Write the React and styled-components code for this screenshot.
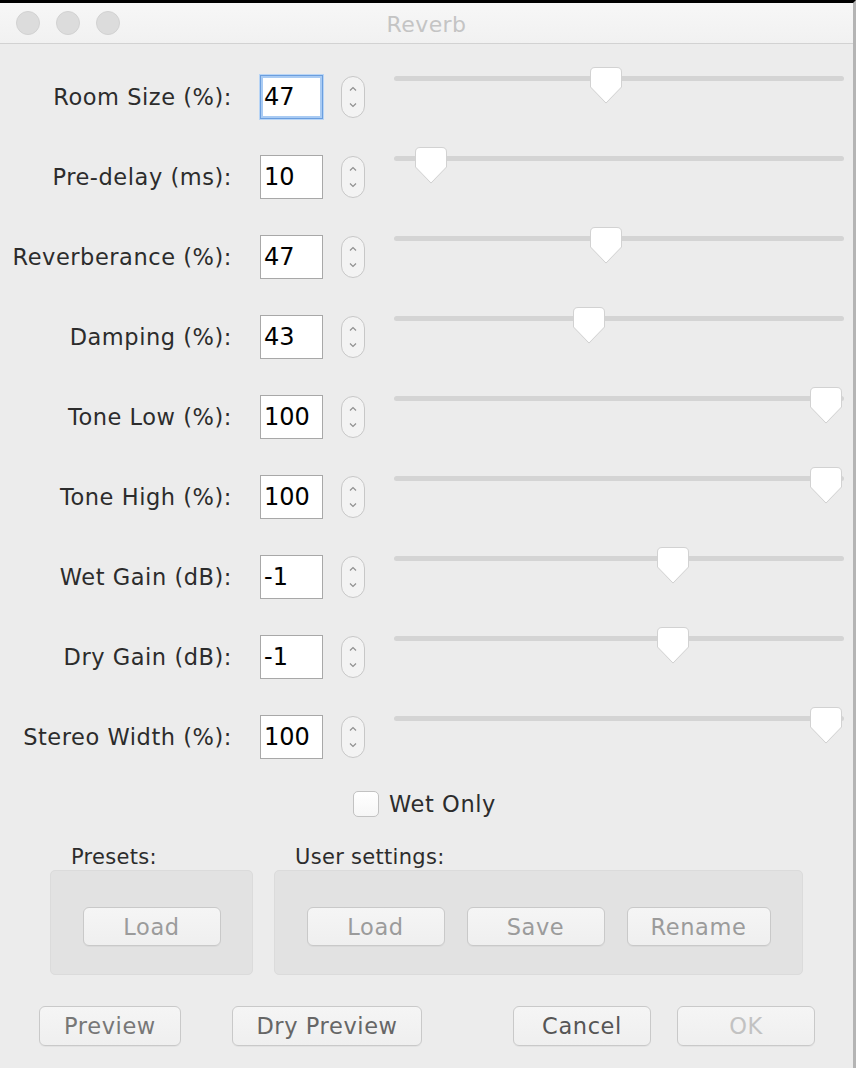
import React from "react";
import styled, { createGlobalStyle } from "styled-components";

const Global = createGlobalStyle`
  html, body { margin: 0; padding: 0; background: #c9c9c9; }
  body { font-family: "DejaVu Sans", "Liberation Sans", sans-serif; }
  * { box-sizing: border-box; }
`;

const Window = styled.div`
  width: 856px;
  height: 1068px;
  background: #ececec;
  border-top: 3px solid #000;
  border-right: 3px solid #b4b4b4;
  display: flex;
  flex-direction: column;
  overflow: hidden;
`;

const TitleBar = styled.div`
  height: 41px;
  flex: none;
  background: linear-gradient(#f7f7f7, #f1f1f1);
  border-bottom: 1px solid #d2d2d2;
  display: flex;
  align-items: center;
  position: relative;
  padding-left: 16px;
  gap: 16px;
`;

const Light = styled.span`
  width: 24px;
  height: 24px;
  border-radius: 50%;
  background: #dcdcdc;
  border: 1px solid #d2d2d2;
`;

const Title = styled.div`
  position: absolute;
  left: 0;
  right: 0;
  top: 2px;
  bottom: 0;
  display: flex;
  align-items: center;
  justify-content: center;
  font-size: 22px;
  letter-spacing: 0.4px;
  color: #c4c4c4;
  pointer-events: none;
`;

const Form = styled.div`
  padding-top: 13px;
  display: flex;
  flex-direction: column;
`;

const Row = styled.div`
  height: 80px;
  display: flex;
  align-items: center;
`;

const Label = styled.div`
  width: 232px;
  text-align: right;
  font-size: 22.5px;
  letter-spacing: 0.55px;
  color: #2c2c2c;
  white-space: nowrap;
`;

const NumBox = styled.div`
  margin-left: 28px;
  width: 63px;
  height: 44px;
  background: #fff;
  border: 1px solid ${(p) => (p.$focus ? "#6b9ede" : "#a8a8a8")};
  box-shadow: ${(p) => (p.$focus ? "inset 0 0 0 2px #a9cbf3, 0 0 0 1px #b9d5f5" : "none")};
  font-size: 24px;
  color: #000;
  padding-left: 3px;
  display: flex;
  align-items: center;
`;

const SpinWrap = styled.div`
  margin-left: 18px;
  width: 24px;
  height: 42px;
  display: flex;
`;

const SliderArea = styled.div`
  margin-left: 29px;
  align-self: flex-start;
  margin-top: 10px;
  width: 450px;
  height: 36px;
  position: relative;
`;

const Track = styled.div`
  position: absolute;
  left: 0;
  right: 0;
  top: 9px;
  height: 5px;
  border-radius: 3px;
  background: #d4d4d4;
`;

const Thumb = styled.svg`
  position: absolute;
  top: 0;
  width: 32px;
  height: 37px;
  overflow: visible;
`;

const CheckRow = styled.div`
  margin-top: 14px;
  display: flex;
  justify-content: center;
  align-items: center;
  gap: 10px;
  padding-right: 4px;
`;

const CheckBox = styled.span`
  width: 26px;
  height: 26px;
  border-radius: 5px;
  border: 1px solid #c2c2c2;
  background: linear-gradient(#ffffff, #f6f6f6);
`;

const CheckLabel = styled.span`
  font-size: 22.5px;
  letter-spacing: 0.6px;
  color: #2c2c2c;
`;

const Groups = styled.div`
  margin-top: 27px;
  padding-left: 50px;
  display: flex;
  gap: 21px;
`;

const Group = styled.div`
  width: ${(p) => p.$w}px;
  display: flex;
  flex-direction: column;
`;

const GroupLabel = styled.div`
  font-size: 21px;
  line-height: 26px;
  letter-spacing: 0.3px;
  color: #2c2c2c;
  padding-left: 21px;
`;

const GroupBox = styled.div`
  height: 105px;
  background: #e2e2e2;
  border: 1px solid #dbdbdb;
  border-radius: 5px;
  display: flex;
  align-items: center;
  justify-content: center;
  gap: 22px;
  padding-top: 8px;
`;

const Button = styled.div`
  width: ${(p) => p.$w}px;
  height: ${(p) => p.$h || 39}px;
  border-radius: 6px;
  border: 1px solid #c9c9c9;
  background: linear-gradient(#f5f5f5, #efefef);
  box-shadow: 0 1px 0 rgba(0, 0, 0, 0.04);
  display: flex;
  align-items: center;
  justify-content: center;
  font-size: 22.5px;
  letter-spacing: 0.6px;
  color: ${(p) => p.$c || "#9b9b9b"};
`;

const BottomBar = styled.div`
  margin-top: 31px;
  padding-left: 39px;
  display: flex;
  align-items: center;
`;

const Spacer = styled.div`
  width: ${(p) => p.$w}px;
  flex: none;
`;

const rows = [
  { label: "Room Size (%):", value: "47", f: 0.47, focus: true },
  { label: "Pre-delay (ms):", value: "10", f: 0.05 },
  { label: "Reverberance (%):", value: "47", f: 0.47 },
  { label: "Damping (%):", value: "43", f: 0.43 },
  { label: "Tone Low (%):", value: "100", f: 1 },
  { label: "Tone High (%):", value: "100", f: 1 },
  { label: "Wet Gain (dB):", value: "-1", f: 19 / 30 },
  { label: "Dry Gain (dB):", value: "-1", f: 19 / 30 },
  { label: "Stereo Width (%):", value: "100", f: 1 },
];

function Spinner() {
  return (
    <SpinWrap>
      <svg width="24" height="42" viewBox="0 0 24 42">
        <rect x="0.5" y="0.5" width="23" height="41" rx="11.5" fill="#f3f3f3" stroke="#c7c7c7" />
        <path d="M9 14.5 L12 11.5 L15 14.5" fill="none" stroke="#909090" strokeWidth="1.2" />
        <path d="M9 27.5 L12 30.5 L15 27.5" fill="none" stroke="#909090" strokeWidth="1.2" />
      </svg>
    </SpinWrap>
  );
}

function Slider({ f }) {
  return (
    <SliderArea>
      <Track />
      <Thumb viewBox="0 0 32 37" style={{ left: `${Math.round(f * 416)}px` }}>
        <path
          d="M5 0.5 H27 Q31.5 0.5 31.5 5 V20 L16 36 L0.5 20 V5 Q0.5 0.5 5 0.5 Z"
          fill="#e6e6e6"
          transform="translate(0 1)"
          opacity="0.6"
        />
        <path
          d="M5 0.5 H27 Q31.5 0.5 31.5 5 V20 L16 36 L0.5 20 V5 Q0.5 0.5 5 0.5 Z"
          fill="#ffffff"
          stroke="#d2d2d2"
          strokeWidth="1"
        />
      </Thumb>
    </SliderArea>
  );
}

export default function App() {
  return (
    <>
      <Global />
      <Window>
        <TitleBar>
          <Light />
          <Light />
          <Light />
          <Title>Reverb</Title>
        </TitleBar>
        <Form>
          {rows.map((r) => (
            <Row key={r.label}>
              <Label>{r.label}</Label>
              <NumBox $focus={r.focus}>{r.value}</NumBox>
              <Spinner />
              <Slider f={r.f} />
            </Row>
          ))}
        </Form>
        <CheckRow>
          <CheckBox />
          <CheckLabel>Wet Only</CheckLabel>
        </CheckRow>
        <Groups>
          <Group $w={203}>
            <GroupLabel>Presets:</GroupLabel>
            <GroupBox>
              <Button $w={138}>Load</Button>
            </GroupBox>
          </Group>
          <Group $w={529}>
            <GroupLabel>User settings:</GroupLabel>
            <GroupBox>
              <Button $w={138}>Load</Button>
              <Button $w={138}>Save</Button>
              <Button $w={144}>Rename</Button>
            </GroupBox>
          </Group>
        </Groups>
        <BottomBar>
          <Button $w={142} $h={40} $c="#777">Preview</Button>
          <Spacer $w={51} />
          <Button $w={190} $h={40} $c="#666">Dry Preview</Button>
          <Spacer $w={91} />
          <Button $w={138} $h={40} $c="#555">Cancel</Button>
          <Spacer $w={26} />
          <Button $w={138} $h={40} $c="#c2c2c2">OK</Button>
        </BottomBar>
      </Window>
    </>
  );
}
